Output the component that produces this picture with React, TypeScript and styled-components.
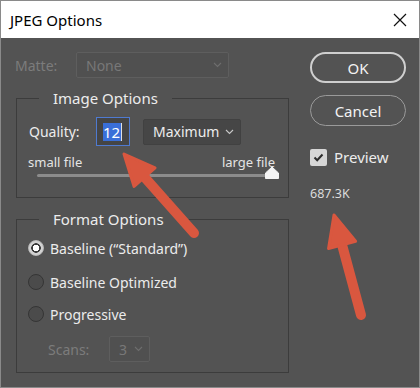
import { FC } from "react";
import styled, { createGlobalStyle } from "styled-components";

const GlobalStyle = createGlobalStyle`
  html, body {
    margin: 0;
    padding: 0;
    background: #535353;
  }
  * { box-sizing: border-box; }
`;

const Dialog = styled.div`
  position: relative;
  width: 420px;
  height: 388px;
  border: 1px solid #8a8a8a;
  background: #535353;
  font-family: "Noto Sans", "Open Sans", sans-serif;
  color: #ececec;
  display: flex;
  flex-direction: column;
  overflow: hidden;
`;

const TitleBar = styled.div`
  height: 37px;
  background: #ffffff;
  display: flex;
  align-items: center;
  justify-content: space-between;
  padding: 0 12px 0 9px;
  color: #000;
  font-size: 15px;
`;

const Body = styled.div`
  flex: 1;
  display: flex;
  padding: 14px 0 0 14px;
`;

const LeftCol = styled.div`
  width: 274px;
  display: flex;
  flex-direction: column;
`;

const RightCol = styled.div`
  margin-left: 21px;
  width: 96px;
  display: flex;
  flex-direction: column;
`;

const Row = styled.div<{ $h: number; $indent?: number; $mt?: number }>`
  height: ${(p) => p.$h}px;
  display: flex;
  align-items: center;
  padding-left: ${(p) => p.$indent ?? 0}px;
  margin-top: ${(p) => p.$mt ?? 0}px;
`;

const Label = styled.span<{ $dim?: boolean; $w?: number; $size?: number }>`
  font-size: ${(p) => p.$size ?? 14}px;
  color: ${(p) => (p.$dim ? "#7c7c7c" : "#ececec")};
  width: ${(p) => (p.$w ? p.$w + "px" : "auto")};
  white-space: nowrap;
`;

const Select = styled.div<{ $w: number; $dim?: boolean }>`
  width: ${(p) => p.$w}px;
  height: 26px;
  border: 1px solid ${(p) => (p.$dim ? "#5e5e5e" : "#414141")};
  background: ${(p) => (p.$dim ? "#505050" : "#464646")};
  border-radius: 2px;
  display: flex;
  align-items: center;
  justify-content: space-between;
  padding: 0 6px 0 9px;
  font-size: 14px;
  color: ${(p) => (p.$dim ? "#787878" : "#ececec")};
`;

const Group = styled.fieldset<{ $h: number; $mt: number }>`
  margin: ${(p) => p.$mt}px 0 0 1px;
  padding: 0 0 0 12px;
  height: ${(p) => p.$h}px;
  border: 1px solid #3c3c3c;
  border-radius: 0;
  min-width: 0;
`;

const Legend = styled.legend`
  margin-left: 10px;
  padding: 0 14px;
  font-size: 15px;
  line-height: 18px;
  color: #ececec;
`;

const NumberBox = styled.div`
  width: 34px;
  height: 29px;
  border: 1px solid #4f7ad0;
  background: #454545;
  display: flex;
  align-items: center;
  padding-left: 6px;
  margin-right: 13px;
  font-size: 15px;
`;

const Selected = styled.span`
  background: #3a6fd8;
  color: #fff;
  line-height: 18px;
  padding-right: 1px;
  border-right: 1px solid #e0e0e0;
`;

const ScaleLabels = styled.div`
  display: flex;
  justify-content: space-between;
  width: 247px;
  margin: 7px 0 0 -1px;
  font-size: 13px;
  color: #e4e4e4;
`;

const Track = styled.div`
  position: relative;
  width: 234px;
  height: 3px;
  margin: 3px 0 0 8px;
  background: #8c8c8c;
  border-radius: 2px;
`;

const Thumb = styled.svg`
  position: absolute;
  right: -9px;
  top: -8px;
`;

const Radio = styled.span<{ $on?: boolean }>`
  width: 16px;
  height: 16px;
  border-radius: 50%;
  margin: 0 6px 0 -1px;
  border: 1px solid ${(p) => (p.$on ? "#b8b8b8" : "#353535")};
  background: ${(p) =>
    p.$on
      ? "radial-gradient(circle, #ffffff 0 3px, #3a3a3a 3.5px 4.5px, #d2d2d2 5px)"
      : "#4b4b4b"};
`;

const PillButton = styled.div<{ $primary?: boolean }>`
  height: 31px;
  border-radius: 16px;
  border: ${(p) => (p.$primary ? "2px solid #cfcfcf" : "1px solid #9a9a9a")};
  display: flex;
  align-items: center;
  justify-content: center;
  font-size: 15px;
  color: #f2f2f2;
  margin-bottom: 12px;
`;

const CheckRow = styled.div`
  display: flex;
  align-items: center;
  margin-top: 9px;
  font-size: 15px;
`;

const CheckBox = styled.span`
  width: 17px;
  height: 17px;
  border-radius: 2px;
  background: #d6d6d6;
  display: inline-flex;
  align-items: center;
  justify-content: center;
  margin-right: 7px;
`;

const FileSize = styled.div`
  margin-top: 18px;
  font-size: 12.5px;
  color: #dcdcdc;
`;

const Overlay = styled.svg`
  position: absolute;
  left: 0;
  top: 0;
  pointer-events: none;
`;

const Chevron: FC<{ color: string }> = ({ color }) => (
  <svg width="9" height="6" viewBox="0 0 9 6">
    <path d="M1 1 L4.5 4.5 L8 1" fill="none" stroke={color} strokeWidth="1.1" />
  </svg>
);

const Arrow: FC<{ tail: [number, number]; tip: [number, number] }> = ({ tail, tip }) => {
  const dx = tip[0] - tail[0];
  const dy = tip[1] - tail[1];
  const len = Math.hypot(dx, dy);
  const ux = dx / len;
  const uy = dy / len;
  const headLen = 31;
  const half = 14;
  const bx = tip[0] - ux * headLen;
  const by = tip[1] - uy * headLen;
  const c1 = [bx - uy * half, by + ux * half];
  const c2 = [bx + uy * half, by - ux * half];
  return (
    <g fill="#d9573f" stroke="#d9573f" strokeLinejoin="round" strokeLinecap="round">
      <line x1={tail[0]} y1={tail[1]} x2={bx + ux * 4} y2={by + uy * 4} strokeWidth="10" />
      <polygon points={`${tip[0]},${tip[1]} ${c1[0]},${c1[1]} ${c2[0]},${c2[1]}`} strokeWidth="3" />
    </g>
  );
};

export default function App() {
  return (
    <>
      <GlobalStyle />
      <Dialog>
        <TitleBar>
          <span>JPEG Options</span>
          <svg width="14" height="14" viewBox="0 0 14 14">
            <path d="M1 1 L13 13 M13 1 L1 13" stroke="#111" strokeWidth="1.2" />
          </svg>
        </TitleBar>
        <Body>
          <LeftCol>
            <Row $h={26}>
              <Label $dim $w={61}>Matte:</Label>
              <Select $w={153} $dim>
                None
                <Chevron color="#6e6e6e" />
              </Select>
            </Row>

            <Group $h={109} $mt={11}>
              <Legend>Image Options</Legend>
              <Row $h={29} $mt={10}>
                <Label $w={67}>Quality:</Label>
                <NumberBox>
                  <Selected>12</Selected>
                </NumberBox>
                <Select $w={98}>
                  Maximum
                  <Chevron color="#c8c8c8" />
                </Select>
              </Row>
              <ScaleLabels>
                <span>small file</span>
                <span>large file</span>
              </ScaleLabels>
              <Track>
                <Thumb width="16" height="14" viewBox="0 0 16 14">
                  <path d="M8 1 L14.5 7 L14.5 12.5 L1.5 12.5 L1.5 7 Z" fill="#f4f4f4" stroke="#f4f4f4" strokeLinejoin="round" />
                </Thumb>
              </Track>
            </Group>

            <Group $h={163} $mt={12}>
              <Legend>Format Options</Legend>
              <Row $h={24} $mt={8}>
                <Radio $on />
                <Label>Baseline (“Standard”)</Label>
              </Row>
              <Row $h={24} $mt={10}>
                <Radio />
                <Label>Baseline Optimized</Label>
              </Row>
              <Row $h={24} $mt={8}>
                <Radio />
                <Label>Progressive</Label>
              </Row>
              <Row $h={26} $indent={19} $mt={10}>
                <Label $dim $w={61}>Scans:</Label>
                <Select $w={41} $dim>
                  3
                  <Chevron color="#6e6e6e" />
                </Select>
              </Row>
            </Group>
          </LeftCol>

          <RightCol>
            <PillButton $primary>OK</PillButton>
            <PillButton>Cancel</PillButton>
            <CheckRow>
              <CheckBox>
                <svg width="11" height="9" viewBox="0 0 11 9">
                  <path d="M1.5 4.5 L4.2 7.2 L9.5 1.5" fill="none" stroke="#2c2c2c" strokeWidth="2" />
                </svg>
              </CheckBox>
              Preview
            </CheckRow>
            <FileSize>687.3K</FileSize>
          </RightCol>
        </Body>

        <Overlay width="420" height="388" viewBox="0 0 420 388">
          <Arrow tail={[193, 232]} tip={[123, 153]} />
          <Arrow tail={[360, 314]} tip={[333, 214]} />
        </Overlay>
      </Dialog>
    </>
  );
}
